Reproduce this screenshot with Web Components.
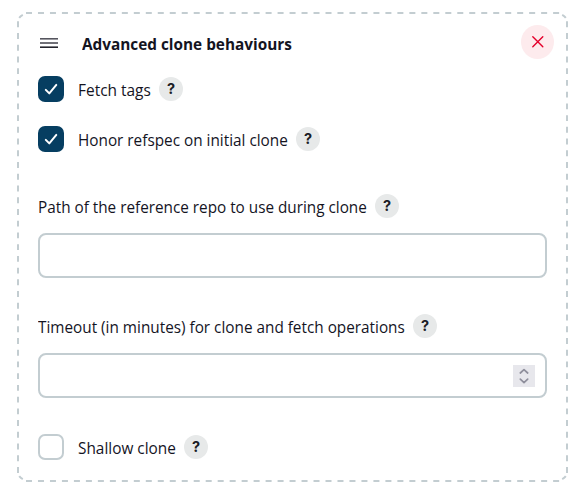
<!DOCTYPE html>
<html lang="en">
<head>
<meta charset="utf-8">
<title>Advanced clone behaviours</title>
<style>
html,body{margin:0;background:#fff}
body{width:584px;height:492px;overflow:hidden;font-family:"Open Sans","Noto Sans",sans-serif;font-size:16.5px;color:#14141f}
</style>
</head>
<body>
<option-panel>
  <panel-header slot="header">Advanced clone behaviours</panel-header>
  <check-row checked><fit-text width="72.5">Fetch tags</fit-text></check-row>
  <check-row checked style="margin-top:24px"><fit-text width="209.5">Honor refspec on initial clone</fit-text></check-row>
  <text-field style="margin-top:42px"><fit-text width="328.5">Path of the reference repo to use during clone</fit-text></text-field>
  <text-field number style="margin-top:36px"><fit-text width="366.5">Timeout (in minutes) for clone and fetch operations</fit-text></text-field>
  <check-row style="margin-top:36px"><fit-text width="97.5">Shallow clone</fit-text></check-row>
</option-panel>
<script>
const define = (name, html, setup) => customElements.define(name, class extends HTMLElement {
  connectedCallback() {
    if (this.shadowRoot) return;
    const root = this.attachShadow({mode: 'open'});
    root.innerHTML = html;
    if (setup) setup(this, root);
  }
});

// Condenses a single line of text to the given width.
define('fit-text', `<style>
:host{display:block;white-space:nowrap;line-height:24px;height:24px}
span{display:inline-block;transform-origin:0 50%}
</style><span><slot></slot></span>`, (el, root) => {
  const span = root.querySelector('span');
  const target = +el.getAttribute('width');
  el.style.width = target + 'px';
  const natural = span.getBoundingClientRect().width;
  span.style.transform = `scaleX(${(target + .3) / natural})`;
});

define('help-button', `<style>
:host{display:block;flex:none;width:24px;height:24px}
button{all:unset;box-sizing:border-box;display:flex;align-items:center;justify-content:center;width:24px;height:24px;border-radius:50%;background:#e7e9e9;font:700 14.5px/24px Inter,sans-serif;color:#1b1b25}
</style><button aria-label="Help">?</button>`);

define('check-box', `<style>
:host{display:block;flex:none;box-sizing:border-box;width:26px;height:26px;border:2px solid #c3cdd1;border-radius:7px}
:host([checked]){border:0;background:#063e61}
svg{display:none;width:26px;height:26px}
:host([checked]) svg{display:block}
</style><svg viewBox="0 0 26 26" fill="none" stroke="#fff" stroke-width="2" stroke-linecap="round" stroke-linejoin="round"><path d="M7.8 13.9 11.3 17.4 18.3 8.9"/></svg>`);

define('check-row', `<style>
:host{display:flex;align-items:center;height:26px}
.label{margin:1px 9px 0 13.5px}
</style><check-box></check-box><div class="label"><slot></slot></div><help-button></help-button>`,
(el, root) => root.querySelector('check-box').toggleAttribute('checked', el.hasAttribute('checked')));

define('text-field', `<style>
:host{display:block}
.label{display:flex;align-items:center;gap:8.5px;height:24px}
.label ::slotted(*){position:relative;top:1px}
.field{box-sizing:border-box;display:flex;align-items:center;justify-content:flex-end;width:509px;height:45px;margin-top:15px;padding-right:10px;border:2px solid #c3cdd1;border-radius:8px}
svg{display:none;width:22px;height:22px;margin-top:1px;background:#e7e7ec}
:host([number]) svg{display:block}
</style><div class="label"><slot></slot><help-button></help-button></div>
<div class="field"><svg viewBox="0 0 22 22" fill="none" stroke="#8f8f9c" stroke-width="1.7" stroke-linecap="round" stroke-linejoin="round"><path d="M7.3 8 11 4.6 14.7 8M7.3 14.2 11 17.6 14.7 14.2"/></svg></div>`);

define('panel-header', `<style>
:host{display:flex;align-items:center;height:34px;font-weight:700}
.grip{flex:none;width:18px;height:14px;margin:2px 23.5px 0 2px}
fit-text{margin-top:4px}
.close{all:unset;display:block;width:33px;height:34px;margin-left:auto;border-radius:50%;background:#fdebed}
.close svg{display:block;width:33px;height:34px}
</style>
<svg class="grip" viewBox="0 0 18 14"><path fill="#55555e" d="M0 2h18v1.6H0z"/><path fill="#4c4c55" d="M0 6.2h18v1.6H0z"/><path fill="#24242d" d="M0 10.4h18V12H0z"/></svg>
<fit-text width="209.5"></fit-text>
<button class="close" aria-label="Delete"><svg viewBox="0 0 33 34" fill="none" stroke="#e4002b" stroke-width="1.4" stroke-linecap="round"><path d="m11.8 11.8 10 10m0-10-10 10"/></svg></button>`);

define('option-panel', `<style>
:host{display:grid;width:584px;height:492px}
svg,.content{grid-area:1/1}
svg{width:584px;height:492px}
.content{padding:25px 30px 0 38px}
.body{width:509px;padding-top:17px}
</style>
<svg viewBox="0 0 584 492" fill="none" stroke="#c3cdd1" stroke-width="2">
<path stroke-dasharray="6 5.98" d="M26 13H560M26 481H560"/>
<path stroke-dasharray="5.9 5.83" d="M18 21.3V473M567 21.3V473"/>
<path d="M19.2 17.8Q20.5 16 22.8 14.8M562.2 14.8Q564.5 16 565.8 17.8M19.2 476.2Q20.5 478 22.8 479.2M562.2 479.2Q564.5 478 565.8 476.2"/>
</svg>
<div class="content"><slot name="header"></slot><div class="body"><slot></slot></div></div>`);

// The header's title is passed on to its fitted label.
const header = document.querySelector('panel-header');
const old = header.shadowRoot.querySelector('fit-text');
const title = document.createElement('fit-text');
title.setAttribute('width', '209.5');
title.textContent = header.textContent;
old.replaceWith(title);
</script>
</body>
</html>
